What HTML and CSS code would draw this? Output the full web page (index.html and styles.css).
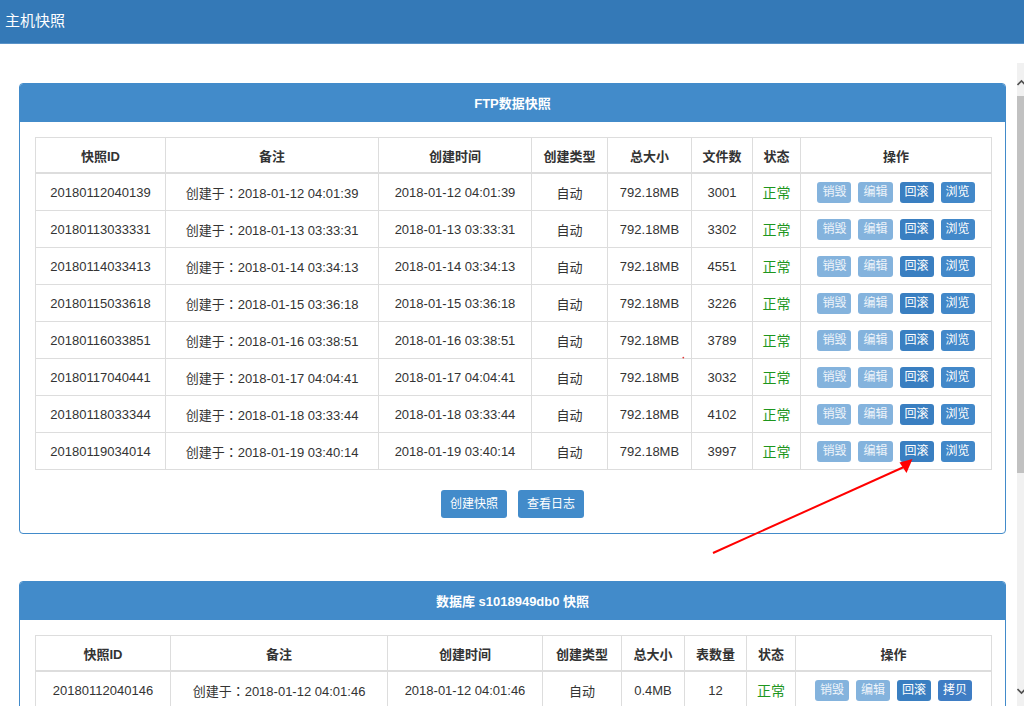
FILE: index.html
```html
<!DOCTYPE html>
<html lang="zh-CN">
<head>
<meta charset="utf-8">
<title>主机快照</title>
<link rel="stylesheet" href="styles.css">
</head>
<body>
<div class="topbar">主机快照</div>
<div class="main">
  <div class="content">
    <div class="panel">
      <div class="panel-heading">FTP数据快照</div>
      <div class="panel-body">
        <table class="grid">
          <colgroup>
            <col class="a1"><col class="a2"><col class="a3"><col class="a4"><col class="a5"><col class="a6"><col class="a7"><col class="a8">
          </colgroup>
          <thead>
            <tr><th>快照ID</th><th>备注</th><th>创建时间</th><th>创建类型</th><th>总大小</th><th>文件数</th><th>状态</th><th>操作</th></tr>
          </thead>
          <tbody>
            <tr><td>20180112040139</td><td>创建于<span class="colon" lang="zh-TW">：</span>2018-01-12 04:01:39</td><td>2018-01-12 04:01:39</td><td>自动</td><td>792.18MB</td><td>3001</td><td class="ok">正常</td><td><div class="ops"><span class="bx off">销毁</span><span class="bx off">编辑</span><span class="bx dark">回滚</span><span class="bx">浏览</span></div></td></tr>
            <tr><td>20180113033331</td><td>创建于<span class="colon" lang="zh-TW">：</span>2018-01-13 03:33:31</td><td>2018-01-13 03:33:31</td><td>自动</td><td>792.18MB</td><td>3302</td><td class="ok">正常</td><td><div class="ops"><span class="bx off">销毁</span><span class="bx off">编辑</span><span class="bx dark">回滚</span><span class="bx">浏览</span></div></td></tr>
            <tr><td>20180114033413</td><td>创建于<span class="colon" lang="zh-TW">：</span>2018-01-14 03:34:13</td><td>2018-01-14 03:34:13</td><td>自动</td><td>792.18MB</td><td>4551</td><td class="ok">正常</td><td><div class="ops"><span class="bx off">销毁</span><span class="bx off">编辑</span><span class="bx dark">回滚</span><span class="bx">浏览</span></div></td></tr>
            <tr><td>20180115033618</td><td>创建于<span class="colon" lang="zh-TW">：</span>2018-01-15 03:36:18</td><td>2018-01-15 03:36:18</td><td>自动</td><td>792.18MB</td><td>3226</td><td class="ok">正常</td><td><div class="ops"><span class="bx off">销毁</span><span class="bx off">编辑</span><span class="bx dark">回滚</span><span class="bx">浏览</span></div></td></tr>
            <tr><td>20180116033851</td><td>创建于<span class="colon" lang="zh-TW">：</span>2018-01-16 03:38:51</td><td>2018-01-16 03:38:51</td><td>自动</td><td>792.18MB</td><td>3789</td><td class="ok">正常</td><td><div class="ops"><span class="bx off">销毁</span><span class="bx off">编辑</span><span class="bx dark">回滚</span><span class="bx">浏览</span></div></td></tr>
            <tr><td>20180117040441</td><td>创建于<span class="colon" lang="zh-TW">：</span>2018-01-17 04:04:41</td><td>2018-01-17 04:04:41</td><td>自动</td><td>792.18MB</td><td>3032</td><td class="ok">正常</td><td><div class="ops"><span class="bx off">销毁</span><span class="bx off">编辑</span><span class="bx dark">回滚</span><span class="bx">浏览</span></div></td></tr>
            <tr><td>20180118033344</td><td>创建于<span class="colon" lang="zh-TW">：</span>2018-01-18 03:33:44</td><td>2018-01-18 03:33:44</td><td>自动</td><td>792.18MB</td><td>4102</td><td class="ok">正常</td><td><div class="ops"><span class="bx off">销毁</span><span class="bx off">编辑</span><span class="bx dark">回滚</span><span class="bx">浏览</span></div></td></tr>
            <tr><td>20180119034014</td><td>创建于<span class="colon" lang="zh-TW">：</span>2018-01-19 03:40:14</td><td>2018-01-19 03:40:14</td><td>自动</td><td>792.18MB</td><td>3997</td><td class="ok">正常</td><td><div class="ops"><span class="bx off">销毁</span><span class="bx off">编辑</span><span class="bx dark">回滚</span><span class="bx">浏览</span></div></td></tr>
          </tbody>
        </table>
        <div class="actions"><span class="btn">创建快照</span><span class="btn">查看日志</span></div>
      </div>
    </div>

    <div class="panel panel2">
      <div class="panel-heading">数据库 s1018949db0 快照</div>
      <div class="panel-body">
        <table class="grid">
          <colgroup>
            <col class="b1"><col class="b2"><col class="b3"><col class="b4"><col class="b5"><col class="b6"><col class="b7"><col class="b8">
          </colgroup>
          <thead>
            <tr><th>快照ID</th><th>备注</th><th>创建时间</th><th>创建类型</th><th>总大小</th><th>表数量</th><th>状态</th><th>操作</th></tr>
          </thead>
          <tbody>
            <tr><td>20180112040146</td><td>创建于<span class="colon" lang="zh-TW">：</span>2018-01-12 04:01:46</td><td>2018-01-12 04:01:46</td><td>自动</td><td>0.4MB</td><td>12</td><td class="ok">正常</td><td><div class="ops"><span class="bx off">销毁</span><span class="bx off">编辑</span><span class="bx dark">回滚</span><span class="bx copy">拷贝</span></div></td></tr>
          </tbody>
        </table>
      </div>
    </div>
  </div>
  <div class="scrollbar">
    <div class="sb-btn"><svg width="17" height="33" viewBox="0 0 17 33"><path d="M4.5 22 L8.5 18 L12.5 22" fill="none" stroke="#505050" stroke-width="1.6"/></svg></div>
    <div class="sb-thumb"></div>
    <div class="sb-track"></div>
    <div class="sb-btn sb-bottom"><svg width="17" height="20" viewBox="0 0 17 20"><path d="M4.5 3 L8.5 7 L12.5 3" fill="none" stroke="#505050" stroke-width="1.6"/></svg></div>
  </div>
</div>
<svg class="annot" width="1024" height="706" viewBox="0 0 1024 706">
  <line x1="713" y1="553" x2="905" y2="466.5" stroke="#ff0000" stroke-width="2"/>
  <polygon points="912.5,459 899.5,462.5 906.5,473" fill="#ff0000"/>
  <circle cx="683.3" cy="357.6" r="0.9" fill="#e23a3a"/>
</svg>
</body>
</html>
```

FILE: styles.css
```css
html, body {
  margin: 0;
  padding: 0;
  background: #ffffff;
  overflow: hidden;
}
body {
  width: 1024px;
  height: 706px;
  position: relative;
  font-family: "Liberation Sans", Arial, "Noto Sans CJK SC", sans-serif;
  font-size: 13px;
  color: #333333;
}
.topbar {
  height: 43px;
  line-height: 41px;
  background: #3479b7;
  border-bottom: 1px solid #5a93c8;
  color: #ffffff;
  font-size: 15px;
  padding-left: 5px;
}
.main {
  display: flex;
  margin-top: 19px;
  height: 643px;
  overflow: hidden;
}
.content {
  flex: 1;
  padding: 20px 11px 0 19px;
  min-width: 0;
}
.panel {
  border: 1px solid #428bca;
  border-radius: 4px;
  background: #ffffff;
}
.panel2 {
  margin-top: 47px;
}
.panel-heading {
  background: #428bca;
  color: #ffffff;
  font-weight: bold;
  text-align: center;
  height: 38px;
  line-height: 39px;
  border-radius: 3px 3px 0 0;
}
.panel-body {
  padding: 15px;
}
.grid {
  border-collapse: collapse;
  table-layout: fixed;
  width: 956px;
}
.grid th, .grid td {
  border: 1px solid #dddddd;
  text-align: center;
  white-space: nowrap;
  padding: 0;
}
.grid th {
  height: 34px;
  font-weight: bold;
  border-bottom: 2px solid #dddddd;
}
.grid td {
  height: 36px;
}
.colon {
  font-family: "Noto Sans CJK TC", "Noto Sans CJK JP", sans-serif;
}
.a1 { width: 130px; } .a2 { width: 213px; } .a3 { width: 153px; } .a4 { width: 76px; }
.a5 { width: 84px; } .a6 { width: 61px; } .a7 { width: 48px; } .a8 { width: 191px; }
.b1 { width: 135px; } .b2 { width: 217px; } .b3 { width: 155px; } .b4 { width: 79px; }
.b5 { width: 63px; } .b6 { width: 62px; } .b7 { width: 49px; } .b8 { width: 196px; }
.ok {
  color: #1e961e;
  font-size: 14px;
}
.ops {
  display: flex;
  justify-content: center;
  gap: 7px;
}
.bx {
  display: inline-block;
  height: 21px;
  line-height: 21px;
  padding: 0 5px;
  font-size: 12px;
  color: #ffffff;
  background: #4288c9;
  border-radius: 3px;
}
.bx.off {
  background: #84b3dd;
  color: #eef4fa;
}
.bx.dark {
  background: #3a7fc1;
}
.bx.copy {
  background: #3f7dc4;
}
.actions {
  display: flex;
  justify-content: center;
  gap: 11px;
  margin-top: 20px;
}
.btn {
  display: inline-block;
  height: 28px;
  line-height: 28px;
  padding: 0 9px;
  font-size: 12px;
  color: #ffffff;
  background: #428bca;
  border-radius: 3px;
}
.scrollbar {
  width: 7px;
  flex-shrink: 0;
  display: flex;
  flex-direction: column;
  background: #f1f1f1;
  overflow: hidden;
}
.sb-btn {
  height: 33px;
  width: 7px;
  overflow: hidden;
  flex-shrink: 0;
}
.sb-bottom {
  height: 20px;
}
.sb-btn svg {
  display: block;
  margin-left: -4px;
}
.sb-thumb {
  height: 377px;
  background: #c1c1c1;
  flex-shrink: 0;
}
.sb-track {
  flex: 1;
}
.annot {
  position: absolute;
  left: 0;
  top: 0;
  pointer-events: none;
}
```
